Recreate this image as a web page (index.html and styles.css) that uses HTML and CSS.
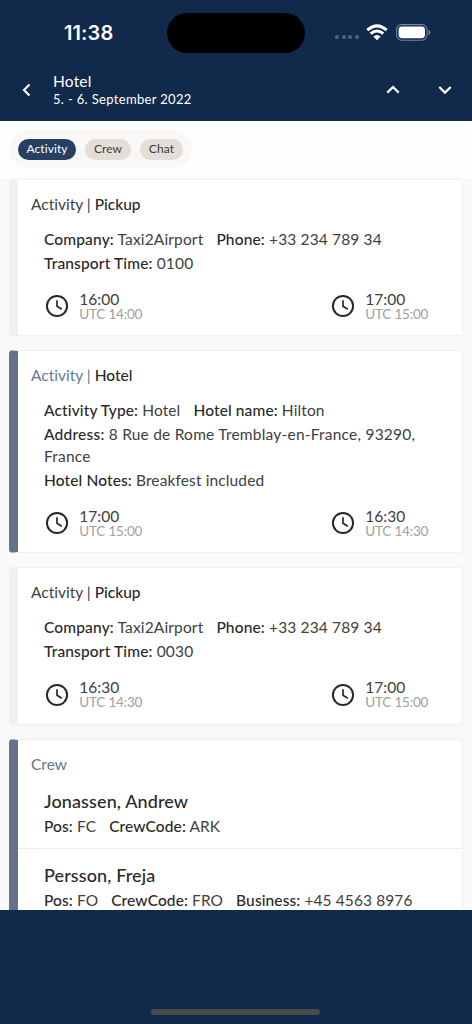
FILE: index.html
```html
<!DOCTYPE html>
<html lang="en">
<head>
<meta charset="utf-8">
<meta name="viewport" content="width=device-width">
<title>Hotel</title>
<link rel="stylesheet" href="styles.css">
</head>
<body>
<svg class="defs" width="0" height="0"><symbol id="clock" viewBox="0 0 24 24"><circle cx="12" cy="12" r="10.1" fill="none" stroke="currentColor" stroke-width="2"/><path d="M12 6.200v6l4.800 3" fill="none" stroke="currentColor" stroke-width="1.700"/></symbol></svg>
<div class="screen">
  <header class="header">
    <div class="status">
      <span class="clock-time">11:38</span>
      <span class="island"></span>
      <span class="signal"><i></i><i></i><i></i><i></i></span>
      <svg class="wifi" width="22" height="17" viewBox="0 0 22 17"><g fill="none" stroke="#fff" stroke-width="3"><path d="M1.300 6.100Q11-2.400 20.700 6.100"/><path d="M4.700 9.700Q11 4.200 17.300 9.700"/></g><path d="M7.300 12.500Q11 9.500 14.700 12.500L11 16.300Z" fill="#fff"/></svg>
      <svg class="battery" width="35" height="17" viewBox="0 0 35 17"><rect x=".6" y=".6" width="30.400" height="15.600" rx="5" fill="none" stroke="#7584a0" stroke-width="1.100"/><rect x="2.600" y="2.600" width="26.400" height="11.600" rx="3.400" fill="#fff"/><path d="M32.500 5.800Q34.400 6.400 34.400 8.400T32.500 11Z" fill="#7584a0"/></svg>
    </div>
    <div class="nav">
      <svg class="back" width="10" height="14" viewBox="0 0 10 14"><path d="M7.500 1.500 2 7l5.500 5.500"/></svg>
      <div class="heading"><h1>Hotel</h1><p>5. - 6. September 2022</p></div>
      <svg class="up" width="14" height="10" viewBox="0 0 14 10"><path d="M1.300 7.600 7 2l5.700 5.600"/></svg>
      <svg width="14" height="10" viewBox="0 0 14 10"><path d="M1.300 2 7 7.600 12.700 2"/></svg>
    </div>
  </header>
  <nav class="tabs"><div class="group"><span class="chip active">Activity</span><span class="chip crew">Crew</span><span class="chip chat">Chat</span></div></nav>
  <main class="list">
    <section class="card">
      <h2>Activity | <b>Pickup</b></h2>
      <div class="details">
        <div class="row"><span><b>Company:</b> Taxi2Airport</span><span><b>Phone:</b> +33 234 789 34</span></div>
        <div class="row"><span><b>Transport Time:</b> 0100</span></div>
      </div>
      <div class="times">
        <div class="time"><svg><use href="#clock"/></svg><div><p>16:00</p><small>UTC 14:00</small></div></div>
        <div class="time"><svg><use href="#clock"/></svg><div><p>17:00</p><small>UTC 15:00</small></div></div>
      </div>
    </section>
    <section class="card accent">
      <h2>Activity | <b>Hotel</b></h2>
      <div class="details">
        <div class="row stay"><span><b>Activity Type:</b> Hotel</span><span><b>Hotel name:</b> Hilton</span></div>
        <div class="row address"><span><b>Address:</b> 8 Rue de Rome Tremblay-en-France, 93290,<br>France</span></div>
        <div class="row stay"><span><b>Hotel Notes:</b> Breakfest included</span></div>
      </div>
      <div class="times">
        <div class="time"><svg><use href="#clock"/></svg><div><p>17:00</p><small>UTC 15:00</small></div></div>
        <div class="time"><svg><use href="#clock"/></svg><div><p>16:30</p><small>UTC 14:30</small></div></div>
      </div>
    </section>
    <section class="card">
      <h2>Activity | <b>Pickup</b></h2>
      <div class="details">
        <div class="row"><span><b>Company:</b> Taxi2Airport</span><span><b>Phone:</b> +33 234 789 34</span></div>
        <div class="row"><span><b>Transport Time:</b> 0030</span></div>
      </div>
      <div class="times">
        <div class="time"><svg><use href="#clock"/></svg><div><p>16:30</p><small>UTC 14:30</small></div></div>
        <div class="time"><svg><use href="#clock"/></svg><div><p>17:00</p><small>UTC 15:00</small></div></div>
      </div>
    </section>
    <section class="card accent">
      <h2>Crew</h2>
      <div class="member">
        <h3>Jonassen, Andrew</h3>
        <div class="row"><span><b>Pos:</b> FC</span><span><b>CrewCode:</b> ARK</span></div>
      </div>
      <div class="member">
        <h3>Persson, Freja</h3>
        <div class="row"><span><b>Pos:</b> FO</span><span><b>CrewCode:</b> FRO</span><span><b>Business:</b> +45 4563 8976</span></div>
      </div>
    </section>
  </main>
  <footer class="footer"><span class="home"></span></footer>
</div>
</body>
</html>
```
FILE: styles.css
```css
* { box-sizing: border-box; }
body, h1, h2, h3, p { margin: 0; font-weight: 400; }
body { font-family: Lato, "Open Sans", sans-serif; font-variant-ligatures: none; color: #404040; }
.defs { display: block; height: 0; }
.screen { width: 472px; height: 1024px; display: flex; flex-direction: column; overflow: hidden; background: #f9f9f9; }
.header { height: 121px; flex: none; background: #11294b; color: #fff; }
.status { height: 65px; display: flex; align-items: center; padding-left: 64px; }
.clock-time { width: 103px; font: 600 20px/24px Inter, sans-serif; letter-spacing: .1px; }
.island { width: 138px; height: 40px; margin-top: 1px; border-radius: 20px; background: #000; }
.signal { display: flex; gap: 2.600px; margin: 9px 0 0 30px; }
.signal i { width: 4px; height: 4px; border-radius: 1.500px; background: #4a5d7b; }
.wifi { margin: -1px 0 0 7.500px; }
.battery { margin: -1px 0 0 7.500px; }
.nav { display: flex; align-items: center; height: 50px; padding: 0 20px 0 22px; }
.nav svg { fill: none; stroke: #fff; stroke-width: 2.200; flex: none; }
.heading { width: 332px; margin-left: 21px; }
.heading h1 { font-size: 15.500px; line-height: 18px; letter-spacing: .2px; }
.heading p { font-size: 13px; line-height: 18px; letter-spacing: .33px; }
.nav .up { margin: 0 38px 0 2px; }
.tabs { height: 57px; flex: none; padding: 9px; background: #fdfefe; }
.group { display: flex; align-items: center; gap: 9px; width: 183px; height: 38px; padding-left: 9px; border-radius: 19px; background: #f9f8f6; }
.chip { height: 21px; border-radius: 11px; background: #e5ddd7; font-size: 12px; line-height: 20px; text-align: center; letter-spacing: .1px; }
.chip.active { width: 58px; color: #fff; background: #273f61; }
.chip.crew { width: 46px; }
.chip.chat { width: 43px; }
.list { flex: 1; min-height: 0; overflow: hidden; padding: 1px 9px 0; display: flex; flex-direction: column; gap: 14px; }
.card { flex: none; background: #fff; border: 1px solid #f0f0f0; border-left: 9px solid #f0f0f0; border-radius: 4px; padding: 13px 13px 13.200px; }
.accent { border-left-color: #63738c; }
h2 { font-size: 15.500px; line-height: 22px; letter-spacing: 0; }
b { font-weight: 500; color: #292929; }
.accent h2 { color: #657792; }
.details { margin: 13px 0 0 13px; display: flex; flex-direction: column; gap: 2px; }
.row { display: flex; gap: 13px; font-size: 15.500px; line-height: 22px; letter-spacing: .15px; white-space: nowrap; }
.address { letter-spacing: .22px; }
.stay { letter-spacing: .12px; }
.times { display: flex; gap: 189px; margin: 17px 0 0 14.300px; }
.time { display: flex; gap: 11px; white-space: nowrap; }
.time > div { width: 63px; }
.time svg { width: 24px; height: 24px; margin: 3.300px -1px 0 0; color: #292929; }
.time p { font-size: 15.500px; line-height: 16px; }
.time small { display: block; font-size: 13.500px; line-height: 15px; letter-spacing: -.2px; color: #a0a0a0; }
.member { margin: 0 -13px; padding: 13px 26px 11px; border-bottom: 1px solid #ededed; }
.member h3 { font-size: 18px; line-height: 26px; letter-spacing: .12px; color: #292929; font-weight: 500; }
.member .row { margin-top: 1px; letter-spacing: .1px; }
.footer { flex: none; height: 114px; padding-top: 99px; background: #11294b; }
.home { display: block; width: 169px; height: 6px; margin-left: 151px; border-radius: 3px; background: #494a4b; }
```
